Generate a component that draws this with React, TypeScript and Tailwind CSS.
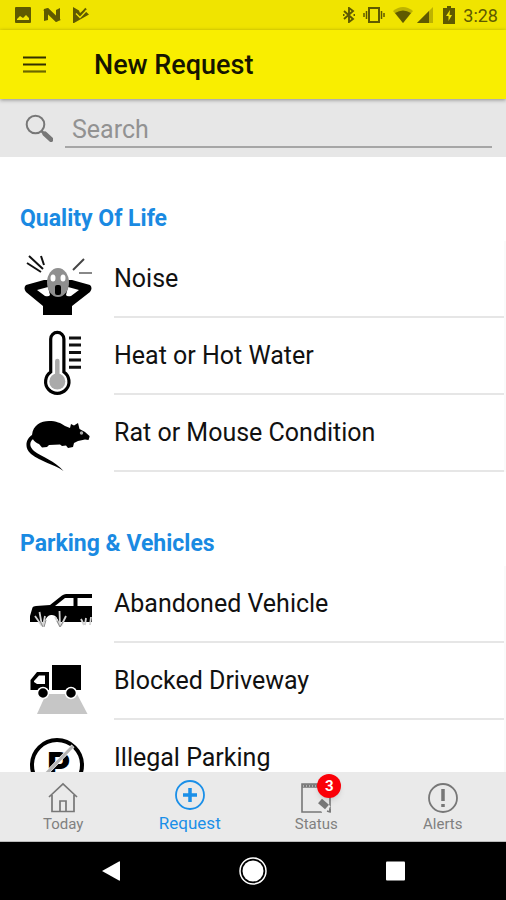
import type { ReactNode } from "react";

const NoiseIcon = () => (
  <svg viewBox="0 0 68 76" className="h-[76px] w-[68px]" aria-hidden="true">
    <g stroke="#111" strokeWidth="2" fill="none">
      <path d="M5 14 19 27M3 21 17 30M17 14 20 23" />
      <path d="M60 17 49 28" stroke="#444" />
      <path d="M55 31H68" stroke="#888" />
    </g>
    <path d="M2 43 20 38H48L66 43Q69 46 66 50L48 64V73H19V64L2 50Q-1 46 2 43Z" />
    <path d="M13 48 24 45 26 53Q25 55 21 54ZM55 48 44 45 42 53Q43 55 47 54Z" fill="#fff" />
    <ellipse cx="34" cy="40.5" rx="11" ry="14.5" fill="#8f8f8f" />
    <ellipse cx="29" cy="36" rx="2.5" ry="3.5" fill="#fff" />
    <ellipse cx="39" cy="36" rx="2.5" ry="3.5" fill="#fff" />
    <rect x="31" y="43" width="6" height="10" rx="2" />
  </svg>
);

const HeatIcon = () => (
  <svg viewBox="0 0 68 76" className="h-[76px] w-[68px]" aria-hidden="true">
    <path
      d="M26.7 53V20a6.6 6.6 0 0 1 13.2 0V53a11.7 11.7 0 1 1-13.2 0Z"
      fill="#fff"
      stroke="#000"
      strokeWidth="3.2"
    />
    <path d="M33.3 42V60" stroke="#aaa" strokeWidth="4.5" strokeLinecap="round" />
    <circle cx="33.3" cy="62.5" r="8" fill="#aaa" />
    <path d="M45 19H57M45 26H57M45 33.5H57M45 41H57M45 48.3H57" stroke="#111" strokeWidth="3" />
  </svg>
);

const RatIcon = () => (
  <svg viewBox="0 0 68 76" className="h-[76px] w-[68px]" aria-hidden="true">
    <path d="M8 39C9 29 17 25 25 25C32 25 37 27 41 30L46 32L47 28L50 29.500L54 27L55.500 33L61 36L65.500 40V41L64.500 44L61 43.500L54 45L50 47L49 51L44 52L42 49.500L38 50L36 48.500L25 49L23 51L18 51.500L15 48C10 46 8 43 8 39Z" />
    <circle cx="57.500" cy="37" r="1.700" fill="#aaa" />
    <path d="M11 42C6 44 4 50 10 55C18 61 31 65 39.500 75C30 68 17 66 7 58C-1 51 3 42 8 39Z" />
  </svg>
);

const AbandonedIcon = () => (
  <svg viewBox="0 0 68 76" className="h-[76px] w-[68px]" aria-hidden="true">
    <path d="M6 55V49L8.500 40.500Q9 39 12 39L26 38L38 28.500Q40 27 42 27H68V55Z" />
    <path d="M31 39 41 31H49.500V39ZM53.500 31H68V39H53.500Z" fill="#fff" />
    <path d="M20 56Q23 47 28 48Q33 48 35 56Z" fill="#fff" />
    <g stroke="#d4d4d4" strokeWidth="1.800" fill="none">
      <path d="M18 59 15.500 45M18 59 11 49M19 59 21 49" />
      <path d="M36 59 35.500 44M36 59 31 50M37 59 42 49" />
      <path d="M60 58 57 52M61 58 62 51M66 58 67 50" />
    </g>
    <path d="M19 60 16 54M20 60 22 53M36 60 33 54M36 60 39 55" stroke="#888" strokeWidth="1" />
  </svg>
);

const DrivewayIcon = () => (
  <svg viewBox="0 0 68 76" className="h-[76px] w-[68px]" aria-hidden="true">
    <path d="M22 50H53L63.500 70H13Z" fill="#c6c6c6" />
    <path d="M28 21H57V46H28ZM6.500 46V36L13 28H25V46Z" />
    <path d="M10 38V37L15 31.500H21V40H13Z" fill="#fff" />
    <g stroke="#fff" strokeWidth="1.500">
      <circle cx="19" cy="49" r="5.500" />
      <circle cx="47" cy="49" r="5.500" />
    </g>
  </svg>
);

const ParkingIcon = () => (
  <svg viewBox="0 0 68 76" className="h-[76px] w-[68px]" aria-hidden="true">
    <circle cx="33" cy="44" r="25" fill="#fff" stroke="#000" strokeWidth="4" />
    <text x="23" y="57" fontFamily="Roboto, sans-serif" fontWeight="900" fontSize="36">
      P
    </text>
    <path d="M49 25 17 58" stroke="#fff" strokeWidth="4" />
    <path d="M49 25 17 58" stroke="#b5b5b5" strokeWidth="3" />
  </svg>
);

const sections: { title: string; items: { label: string; icon: ReactNode }[] }[] = [
  {
    title: "Quality Of Life",
    items: [
      { label: "Noise", icon: <NoiseIcon /> },
      { label: "Heat or Hot Water", icon: <HeatIcon /> },
      { label: "Rat or Mouse Condition", icon: <RatIcon /> },
    ],
  },
  {
    title: "Parking & Vehicles",
    items: [
      { label: "Abandoned Vehicle", icon: <AbandonedIcon /> },
      { label: "Blocked Driveway", icon: <DrivewayIcon /> },
      { label: "Illegal Parking", icon: <ParkingIcon /> },
    ],
  },
];

const StatusBar = () => (
  <div className="flex h-[30px] shrink-0 items-center justify-between bg-[#f0e400] pr-2 pl-[15px] text-[#5f5a00]">
    <div className="flex items-center gap-3">
      <svg viewBox="0 0 16 16" className="size-4" fill="currentColor" aria-hidden="true">
        <path fillRule="evenodd" d="M1 0H15Q16 0 16 1V15Q16 16 15 16H1Q0 16 0 15V1Q0 0 1 0ZM2 13H14V11L11 8L8 11L5 9L2 12Z" />
      </svg>
      <svg viewBox="0 0 18 16" className="h-4 w-[18px]" fill="currentColor" aria-hidden="true">
        <path d="M1 2 5 1 13 9V3L17 1V13L13 15 5 7V13L1 14Z" />
        <path d="M0 3 5 1 18 13 13 15Z" opacity=".7" />
      </svg>
      <svg viewBox="0 0 16 16" className="size-4" fill="currentColor" aria-hidden="true">
        <path d="M0 0 6 3.500 7 6 11 3 16 7.500 1 16H0Z" />
        <path d="M3.500 4.500 7 8.500 13 1.500" fill="none" stroke="currentColor" strokeWidth="2" />
        <path d="M3 6.500 7 10.500 13.500 3.500" fill="none" stroke="#f0e400" strokeWidth="1.300" />
      </svg>
    </div>
    <div className="flex items-center">
      <svg viewBox="0 0 12 16" className="mr-2 h-4 w-3" fill="none" stroke="currentColor" strokeWidth="1.9" aria-hidden="true">
        <path d="M1 4 10 12 6 15V1L10 4 1 12" />
        <path d="M0 8H1.500M10.500 8H12" />
      </svg>
      <svg viewBox="0 0 22 16" className="mr-2 h-4 w-[22px]" fill="none" stroke="currentColor" aria-hidden="true">
        <rect x="6" y="1" width="10" height="14" strokeWidth="2" />
        <path d="M3.500 4V12M18.500 4V12M1 6V10M21 6V10" strokeWidth="1.500" />
      </svg>
      <svg viewBox="0 0 20 16" className="mr-1 h-4 w-5" fill="currentColor" aria-hidden="true">
        <path d="M0 4Q10-4 20 4L10 16Z" opacity=".35" />
        <path d="M2 6Q10 1 18 6L10 16Z" />
      </svg>
      <svg viewBox="0 0 16 16" className="mr-2.5 size-4" fill="currentColor" aria-hidden="true">
        <path d="M16 0V16H0Z" opacity=".35" />
        <path d="M12 4V16H0Z" />
      </svg>
      <svg viewBox="0 0 12 18" className="mr-2 h-[18px] w-3" aria-hidden="true">
        <path d="M4 0H8V2H12V18H0V2H4Z" fill="currentColor" />
        <path d="M7 4 3 10H5.500V15L9 9H6.500Z" fill="#f0e400" />
      </svg>
      <span className="pt-0.5 text-[18px] leading-5">3:28</span>
    </div>
  </div>
);

const Header = () => (
  <header className="z-10 flex h-[69px] shrink-0 items-center gap-[47px] bg-[#f9ee00] pl-[23px] shadow-[0_1px_4px_rgba(0,0,0,0.4)]">
    <button type="button" aria-label="Menu" className="text-[#333000]">
      <svg viewBox="0 0 24 24" className="size-6" stroke="currentColor" strokeWidth="2.2" aria-hidden="true">
        <path d="M0 4.500H23M0 11.500H23" />
        <path d="M0 18.500H23" stroke="#6b6600" />
      </svg>
    </button>
    <h1 className="text-[27px] leading-8 font-medium text-[#161500]">New Request</h1>
  </header>
);

const SearchBar = () => (
  <form role="search" className="flex h-[58px] shrink-0 items-center bg-[#e7e7e7] pr-3.5 pl-[25px]">
    <label htmlFor="search" aria-label="Search" className="mr-3 block">
      <svg viewBox="0 0 28 28" className="size-7" fill="none" stroke="#777" aria-hidden="true">
        <circle cx="10.500" cy="10.500" r="8.800" strokeWidth="2" />
        <path d="M16.500 17 20 20.500" strokeWidth="2.500" />
        <path d="M20 20 26 25.500" strokeWidth="5" strokeLinecap="round" />
      </svg>
    </label>
    <input
      id="search"
      type="text"
      placeholder="Search"
      className="h-10 min-w-0 flex-1 border-b-2 border-[#a6a6a6] bg-transparent pt-1 pl-[7px] text-[25px] text-black outline-none placeholder:text-[#929292]"
    />
  </form>
);

const RequestList = () => (
  <main className="min-h-0 flex-1 overflow-hidden bg-white pt-10">
    {sections.map((section) => (
      <section key={section.title} className="mb-[50px]">
        <h2 className="flex h-11 items-center pl-5 text-[23px] font-bold text-[#1a8ae2]">
          {section.title}
        </h2>
        <ul className="border-r-2 border-[#fafafa]">
          {section.items.map((item) => (
            <li key={item.label}>
              <button type="button" className="flex w-full items-center gap-[22px] pl-6 text-left">
                {item.icon}
                <span className="flex h-[77px] flex-1 items-center border-b-2 border-[#e6e6e6] text-[25px] text-[#111]">
                  {item.label}
                </span>
              </button>
            </li>
          ))}
        </ul>
      </section>
    ))}
  </main>
);

const TabBar = () => (
  <nav className="grid h-[70px] shrink-0 grid-cols-4 border-b border-[#bbb] bg-[#eaeaea] text-[15px] leading-5 text-[#808080]">
    <a href="#today" className="flex flex-col items-center pt-2.5">
      <svg viewBox="0 0 32 32" className="size-8" fill="none" stroke="#777" strokeWidth="1.7" aria-hidden="true">
        <path d="M2 15 16 2 30 15M5 13V29.500H27V13M13 29V19H19V29" />
      </svg>
      Today
    </a>
    <a href="#request" className="flex flex-col items-center gap-0.5 pt-[7px] text-[17px] text-[#1a8fe8]">
      <svg viewBox="0 0 32 32" className="size-8" fill="none" stroke="currentColor" aria-hidden="true">
        <circle cx="16" cy="16" r="14" strokeWidth="1.800" />
        <path d="M16 9V23M9 16H23" strokeWidth="3.500" />
      </svg>
      Request
    </a>
    <a href="#status" className="flex flex-col items-center pt-2.5">
      <span className="relative">
        <svg viewBox="0 0 32 32" className="size-8" fill="none" stroke="#777" aria-hidden="true">
          <path d="M22 30H2V2H30V30" strokeWidth="1.600" />
          <path d="M2 4H30" strokeWidth="3.500" />
          <path d="M3 4H30" strokeWidth="1" stroke="#eaeaea" strokeDasharray="1 2" />
          <path d="M19 20 27 28" strokeWidth="10" stroke="#eaeaea" />
          <path d="M20 19 27 25" strokeWidth="6" />
          <path d="M27 29 30 30V27" strokeWidth="1.500" />
        </svg>
        <span className="absolute -top-2 left-[17px] flex size-6 items-center justify-center rounded-full bg-[#fa0008] text-[15px] font-bold text-white shadow-md">
          3
        </span>
      </span>
      Status
    </a>
    <a href="#alerts" className="flex flex-col items-center pt-2.5">
      <svg viewBox="0 0 32 32" className="size-8" fill="none" stroke="#777" aria-hidden="true">
        <circle cx="16" cy="16" r="14" strokeWidth="1.800" />
        <path d="M16 7V19M16 22V25" strokeWidth="3.500" />
      </svg>
      Alerts
    </a>
  </nav>
);

const SystemNav = () => (
  <div className="flex h-[58px] shrink-0 items-center justify-center gap-[114px] bg-black">
    <button type="button" aria-label="Back">
      <svg viewBox="0 0 28 28" className="size-7" fill="#fff" aria-hidden="true">
        <path d="M5 14 22 4.500Q23 4 23 5V23Q23 24 22 23.500Z" />
      </svg>
    </button>
    <button type="button" aria-label="Home">
      <svg viewBox="0 0 28 28" className="size-7" aria-hidden="true">
        <circle cx="14" cy="14" r="13" fill="none" stroke="#fff" strokeWidth="1.500" />
        <circle cx="14" cy="14" r="10.500" fill="#fff" />
      </svg>
    </button>
    <button type="button" aria-label="Recent apps">
      <svg viewBox="0 0 28 28" className="size-7" fill="#fff" aria-hidden="true">
        <rect x="5" y="4.500" width="19" height="19" rx="1" />
      </svg>
    </button>
  </div>
);

export default function App() {
  return (
    <div className="flex h-screen flex-col font-[Roboto,sans-serif]">
      <StatusBar />
      <Header />
      <SearchBar />
      <RequestList />
      <TabBar />
      <SystemNav />
    </div>
  );
}
